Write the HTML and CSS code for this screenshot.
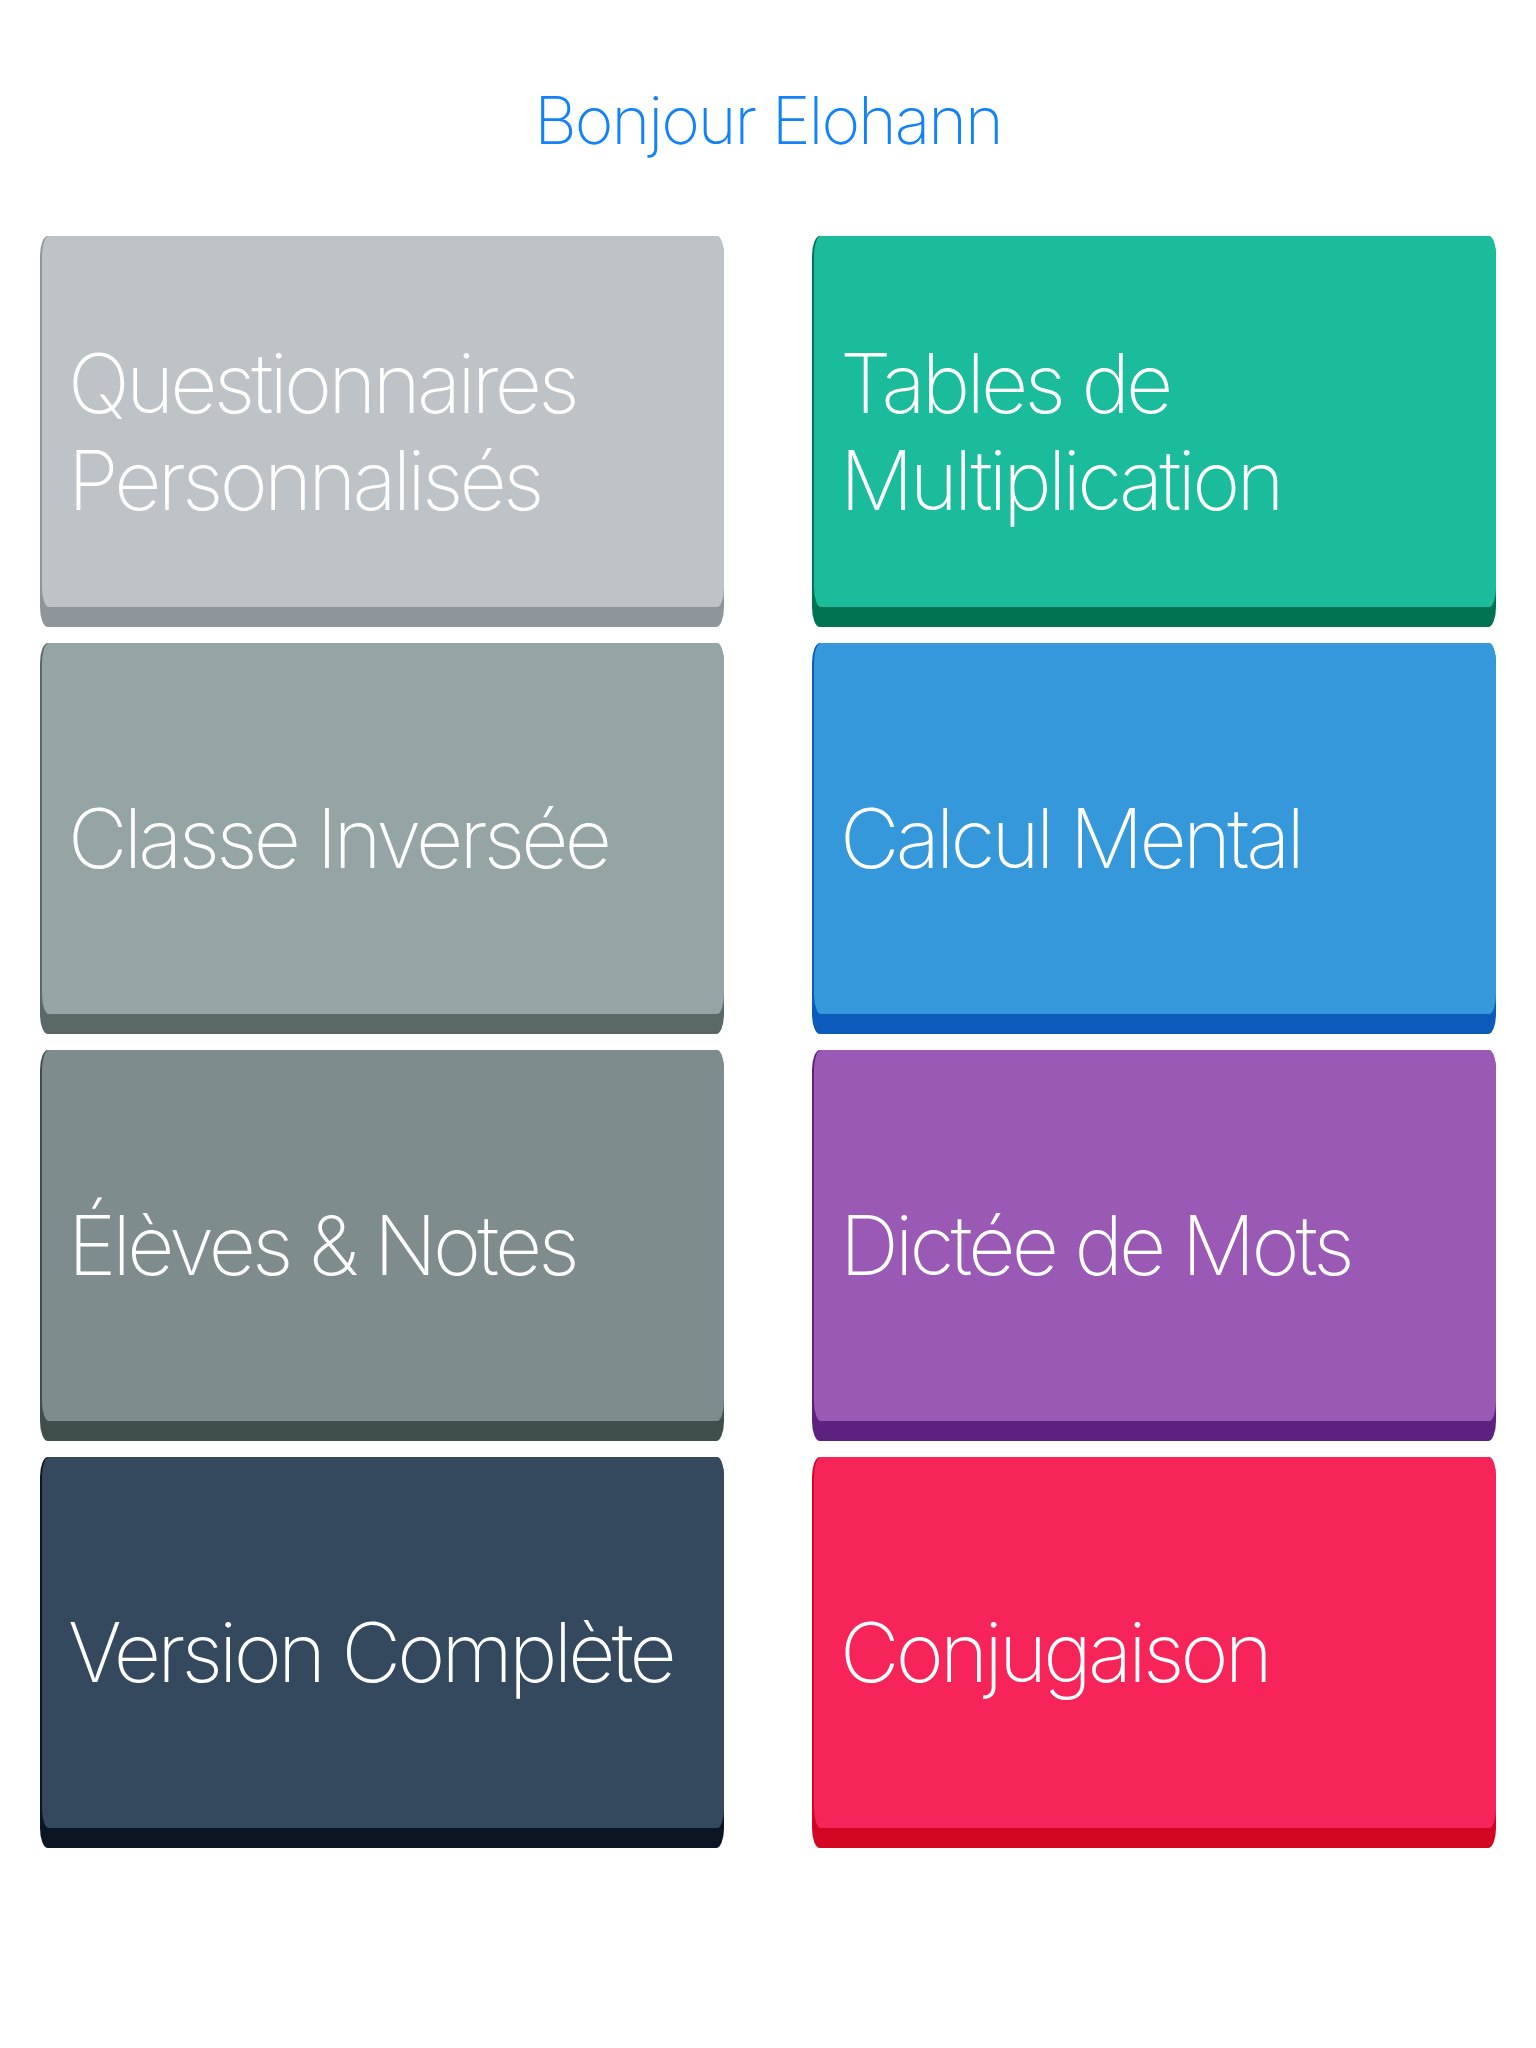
FILE: index.html
```html
<!DOCTYPE html>
<html lang="fr">
<head>
    <meta charset="UTF-8">
    <meta name="viewport" content="width=device-width, initial-scale=1.0">
    <title>Accueil</title>
    <link rel="stylesheet" href="styles.css">
</head>
<body>

    <!-- Salutation -->
    <div class="greeting">Bonjour Elohann</div>

    <!-- Menu principal -->
    <main class="menu">
        <a class="tile silver" href="#"><span class="face">Questionnaires<br>Personnalisés</span></a>
        <a class="tile green" href="#"><span class="face">Tables de<br>Multiplication</span></a>
        <a class="tile concrete" href="#"><span class="face">Classe Inversée</span></a>
        <a class="tile blue" href="#"><span class="face">Calcul Mental</span></a>
        <a class="tile asbestos" href="#"><span class="face">Élèves &amp; Notes</span></a>
        <a class="tile purple" href="#"><span class="face">Dictée de Mots</span></a>
        <a class="tile navy" href="#"><span class="face">Version Complète</span></a>
        <a class="tile red" href="#"><span class="face">Conjugaison</span></a>
    </main>

</body>
</html>
```

FILE: styles.css
```css
body {
    margin: 0;
    padding: 0;
    background-color: #fff;
    font-family: Inter, "Noto Sans", sans-serif;
    font-weight: 150;
}

.greeting {
    text-align: center;
    color: #1282f6;
    font-size: 66px;
    line-height: 80px;
    padding-top: 80px;
    padding-bottom: 76px;
    letter-spacing: -2px;
}

.menu {
    display: grid;
    grid-template-columns: 684px 684px;
    column-gap: 88px;
    row-gap: 16px;
    padding: 0 40px;
}

.tile {
    display: flex;
    height: 391px;
    padding: 0 0 20px 2px;
    box-sizing: border-box;
    border-radius: 8px / 20px;
    text-decoration: none;
    background-color: var(--edge);
}

.tile .face {
    flex: 1;
    display: flex;
    align-items: center;
    padding: 20px 0 0 26px;
    border-radius: 7px / 20px;
    background-color: var(--main);
    color: #fff;
    font-size: 82px;
    line-height: 97px;
    letter-spacing: -3.8px;
}

/* Couleurs des boutons */
.silver   { --main: #bdc3c7; --edge: #8e959b; }
.green    { --main: #1abc9c; --edge: #017352; }
.concrete { --main: #95a5a6; --edge: #5a6867; }
.blue     { --main: #3598db; --edge: #0c5ab9; }
.asbestos { --main: #7f8c8d; --edge: #414e4e; }
.purple   { --main: #9b59b6; --edge: #5d2180; }
.navy     { --main: #34495e; --edge: #0c1524; }
.red      { --main: #f62459; --edge: #d40522; }
```
